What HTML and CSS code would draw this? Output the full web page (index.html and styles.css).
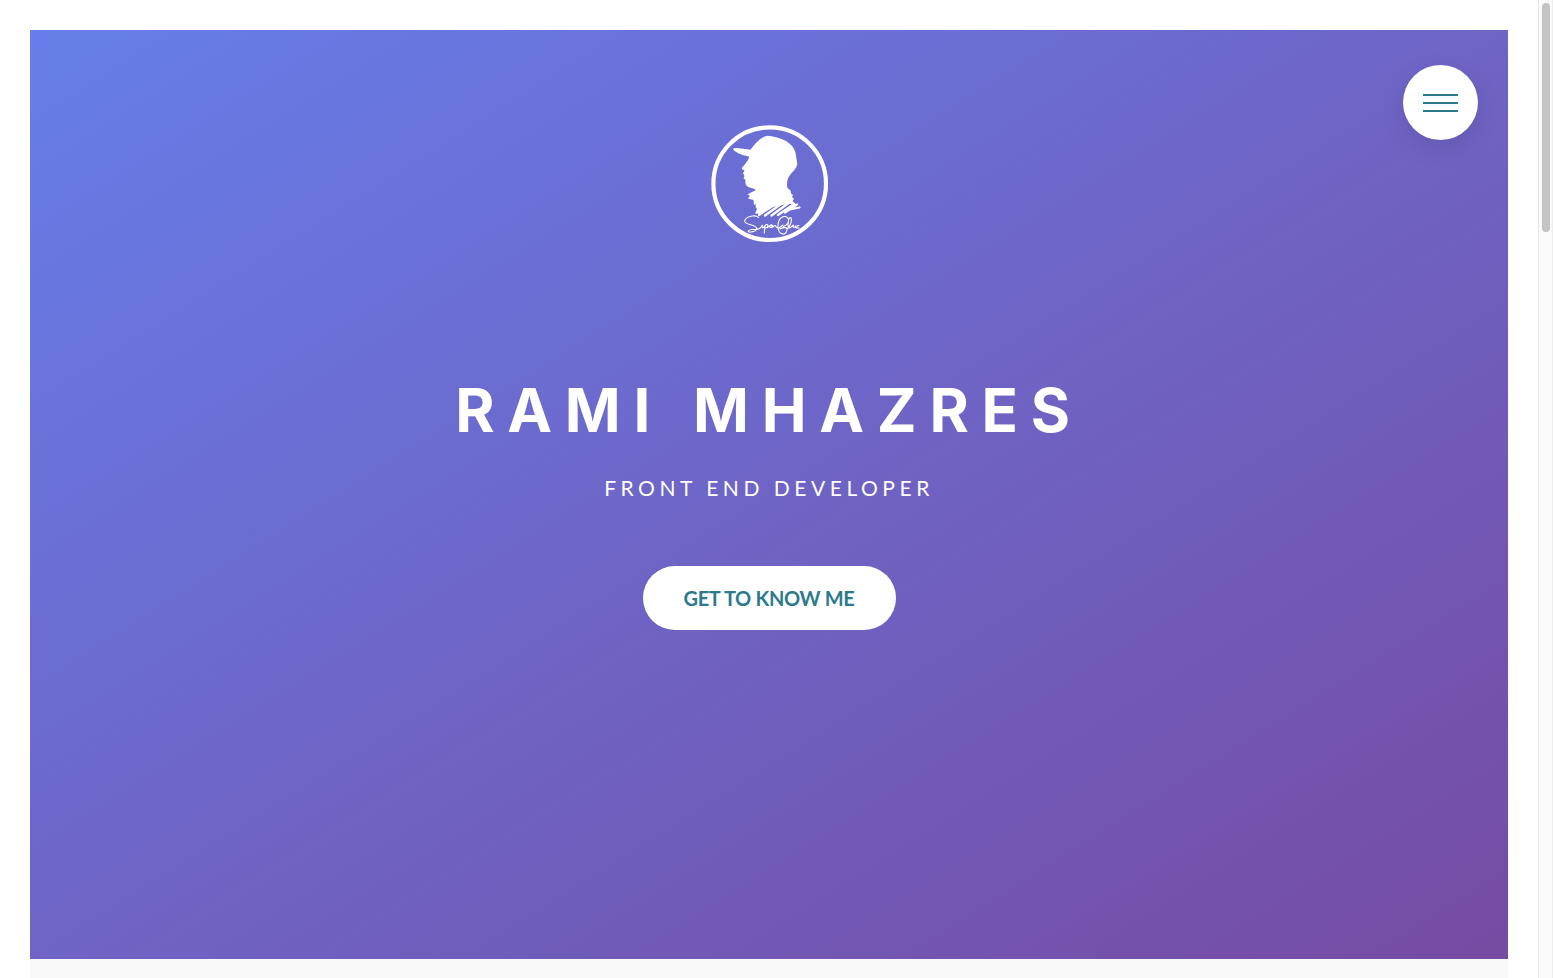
FILE: index.html
```html
<!DOCTYPE html>
<html lang="en">
<head>
<meta charset="utf-8">
<title>Rami Mhazres</title>
<link rel="stylesheet" href="styles.css">
</head>
<body>
<div class="page">
  <main class="content">
    <header class="hero">
      <svg class="logo" viewBox="0 0 130 130" aria-label="Logo">
        <circle class="ring" cx="64.7" cy="63.7" r="56.3"/>
        <path class="head" d="M28 29 Q29 27.8 32 28 L45.500 29.700 Q48 26 51.500 22.500 Q57 16.500 62.700 15.700 Q68 16 73 17.700 Q82 20 87 26 Q91 31 91.300 38 L92.300 44 Q92 47 89 50.500 Q83.500 56 82.500 60 Q81.500 65 82.500 68 L85.500 70.500 L86 73.500 L88 75 L87 77 L89 79 L87.500 81 L90 83.500 L80 84.500 L68 87 L56 94 L50 93.500 L52 89 L50.500 87 L51 84 L49 85 L48.500 80 L43 78.500 L45 76 L42.500 74.500 L46 72.500 L51 70 L49 68.700 Q43 67.500 41 65 Q40 62 40.500 59.500 L38.500 58.500 L39.500 56 L38 53 L39.500 50.500 L37 49 Q36.500 47.500 39 45.500 L43 40 L44.300 36.700 L37 34.800 Q29 31.500 28 29Z"/>
        <path class="stroke" d="M54 95 L68 85.500 M60 95.500 L76 84 M66.500 95.500 L83 83.500 M73 95 L89 84 M80 92.500 L92 84.500 M85 89.500 L94.500 87.500"/>
        <path class="sign" d="M53.500 97.500 C51 94.500 43 96 40.500 99 C37.500 103 43 104 48 105.500 C55 108 51 111.500 46 112 C41 112.500 43 109 49 109.500 C54 110 56 108 57.500 105 C56.500 109 58.500 108.500 60 105.500 L59.300 113 M60 106 C62 103 64 105 62 107.500 L60.500 108 C64 108 65 104 67 105 C69 107 64 109 65 106 C67 104 67 109 69 106 C71 104 71 109 74 108 L78 105 M78 107 C85 104 85 97 80 96.500 C75 96 72.500 102 73 108 C74 115 81 116 82 110 C82.500 107 79 107 75 109 M82 109 C86 106 87.500 98 85.500 97.500 C83 98 82 109 84.500 108 C87 107 88 104 88.500 105.500 C87 108 90 108 90.500 105.500 C90 109 92 108 92 106 L94 105.500 M91.500 108 L94 108"/>
      </svg>
      <h1 class="name"><span class="first">RAMI</span><span class="last">MHAZRES</span></h1>
      <p class="role">FRONT END DEVELOPER</p>
      <a class="cta" href="#about"><span class="cta-label">GET TO KNOW ME</span></a>
      <button class="menu" aria-label="Menu"><span class="bar"></span><span class="bar"></span><span class="bar"></span></button>
    </header>
    <section class="about" id="about"></section>
  </main>
  <aside class="scrollbar"><div class="thumb"></div></aside>
</div>
</body>
</html>
```
FILE: styles.css
```css
* { box-sizing: border-box; }
body {
  margin: 0;
  background: #fff;
  font-family: Lato, "Liberation Sans", sans-serif;
}
.page {
  display: flex;
  height: 978px;
  overflow: hidden;
}
.content {
  flex: 1;
  display: flex;
  flex-direction: column;
  padding: 30px 30px 0;
}
.hero {
  position: relative;
  flex: 0 0 929px;
  display: flex;
  flex-direction: column;
  align-items: center;
  padding-top: 90px;
  color: #fff;
  background: linear-gradient(to right bottom, #667eea, #764ba2);
}
.logo { width: 130px; height: 130px; display: block; margin-left: 2px; }
.ring { fill: none; stroke: #fff; stroke-width: 4.2; }
.head { fill: #fff; }
.stroke { fill: none; stroke: #fff; stroke-width: 2.2; stroke-linecap: round; }
.sign { fill: none; stroke: #fff; stroke-width: 1.1; stroke-linecap: round; }
.name {
  display: flex;
  gap: 30px;
  margin: 124px 0 0;
  font-family: Inter, sans-serif;
  font-size: 60px;
  font-weight: 700;
  line-height: 72px;
  letter-spacing: 12.75px;
  white-space: nowrap;
}
.role {
  margin: 29px 0 0;
  font-size: 21px;
  line-height: 26px;
  letter-spacing: 4.53px;
  white-space: nowrap;
}
.cta {
  display: flex;
  align-items: center;
  justify-content: center;
  width: 253px;
  height: 64px;
  margin-top: 65px;
  padding-bottom: 1px;
  border-radius: 32px;
  background: #fff;
  color: #2c7a8c;
  font-size: 20px;
  font-weight: 700;
  letter-spacing: -.3px;
  text-decoration: none;
  white-space: nowrap;
}
.menu {
  position: absolute;
  top: 35px;
  right: 30px;
  width: 75px;
  height: 75px;
  padding: 0;
  border: 0;
  border-radius: 50%;
  background: #fff;
  box-shadow: 0 8px 24px rgba(0, 0, 0, .1);
  display: flex;
  flex-direction: column;
  align-items: center;
  justify-content: center;
  gap: 6px;
}
.bar { width: 35px; height: 2px; background: #2c7a8c; }
.about { flex: 1; background: #f9f9f9; }
.scrollbar {
  width: 15px;
  padding: 3px 0 0 3px;
  background: #fafafa;
  border-left: 1px solid #e6e6e6;
  border-right: 1px solid #ededed;
}
.thumb { width: 8px; height: 229px; border-radius: 4px; background: #c4c4c4; }
```
